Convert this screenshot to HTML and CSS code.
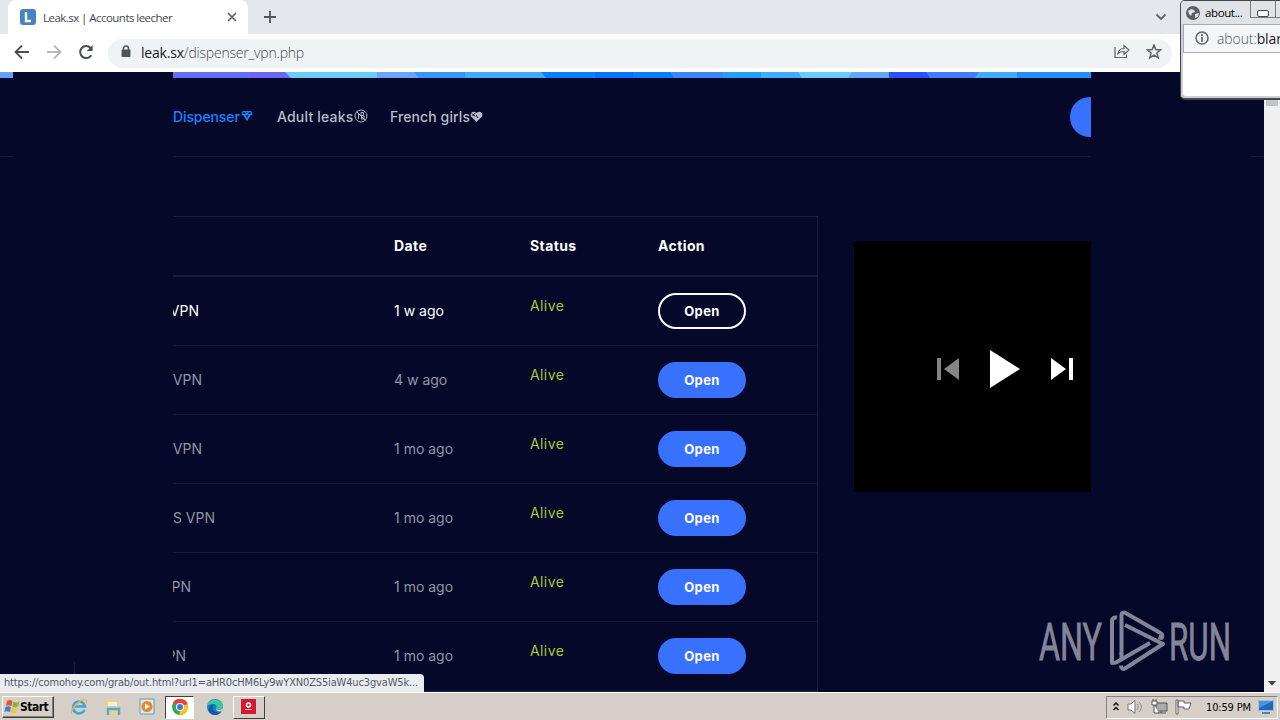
FILE: index.html
```
<!DOCTYPE html>
<html lang="en">
<head>
  <meta charset="UTF-8">
  <title>Leak.sx | Accounts leecher</title>
  <link rel="stylesheet" href="styles.css">
</head>
<body>
  <header class="tab-strip">
    <div class="tab">
      <span class="favicon"><svg width="16" height="16"><path d="M6 3v9h5" fill="none" stroke="#fff" stroke-width="2.4"/></svg></span>
      <span class="tab-title">Leak.sx | Accounts leecher</span>
      <svg class="tab-close" width="10" height="10"><path d="M1 1l8 8M9 1l-8 8" stroke="#5f6368" stroke-width="1.7"/></svg>
    </div>
    <svg class="new-tab" width="14" height="14"><path d="M7 1v12M1 7h12" stroke="#505458" stroke-width="1.8"/></svg>
    <svg class="tab-search" width="12" height="8"><path d="M1.500 1.500L6 6l4.500-4.500" fill="none" stroke="#5f6368" stroke-width="1.800"/></svg>
  </header>
  <div class="toolbar">
    <svg width="16" height="16" fill="none" stroke="#4a4d51" stroke-width="1.800"><path d="M15 7H2M8 .5L1.500 7 8 13.500"/></svg>
    <svg width="16" height="16" fill="none" stroke="#b5b7ba" stroke-width="1.800"><path d="M1 7h13M8 .5L14.500 7 8 13.500"/></svg>
    <svg width="16" height="16"><path d="M13.300 10.200A6 6 0 1 1 12.600 3" fill="none" stroke="#4a4d51" stroke-width="2"/><path d="M14.600 0v6H8.800z" fill="#4a4d51"/></svg>
    <div class="address">
      <svg width="10" height="14"><path d="M2.500 5V3.500a2.500 2.500 0 0 1 5 0V5" fill="none" stroke="#505458" stroke-width="1.500"/><rect x="0.500" y="4.500" width="9" height="7.500" rx="1" fill="#505458"/></svg>
      <span class="url"><b>leak.sx</b>/dispenser_vpn.php</span>
      <svg class="share" width="16" height="16" fill="none" stroke="#5f6368" stroke-width="1.200"><path d="M1 3v10.500h11.500v-3M4 9.500c.5-3.500 2.500-5 6-5V1.500L15 6l-5 4.500v-3c-2.500 0-4.500.5-6 2z"/></svg>
      <svg class="star" width="16" height="16"><path d="M8 1l1.800 4.600 4.900.3L10.900 9l1.300 4.800L8 11.100l-4.200 2.700L5.100 9 1.300 5.900l4.900-.3z" fill="none" stroke="#5f6368" stroke-width="1.500"/></svg>
    </div>
  </div>

  <main class="page">
    <svg class="ribbon" width="1264" height="6">
      <path d="M0 0h13v6H0z" fill="#679fff"/>
      <path d="M173 0h77v6h-77z" fill="#636dfe"/>
      <path d="M249 0h42v6h-42z" fill="#6b67f7"/>
      <path d="M285 0h93v6h-87z" fill="#68cef5"/>
      <path d="M377 0h42v6h-42z" fill="#6ca6fa"/>
      <path d="M414 0h53v6h-48z" fill="#3996ff"/>
      <path d="M465 0h84v6h-84z" fill="#3caef9"/>
      <path d="M541 0h55v6h-50z" fill="#0481fb"/>
      <path d="M595 0h39v6h-39z" fill="#0473fc"/>
      <path d="M633 0h43v6h-43z" fill="#087efc"/>
      <path d="M670 0h54v6h-50z" fill="#3e86fb"/>
      <path d="M723 0h39v6h-39z" fill="#229eff"/>
      <path d="M761 0h42v6h-42z" fill="#3caefb"/>
      <path d="M798 0h56v6h-52z" fill="#68cdf5"/>
      <path d="M852 0h38v6h-42z" fill="#62a6fa"/>
      <path d="M889 0h42v6h-42z" fill="#2b50fc"/>
      <path d="M926 0h54v6h-50z" fill="#427cfe"/>
      <path d="M979 0h39v6h-43z" fill="#3daef7"/>
      <path d="M1017 0h74v6h-74z" fill="#208fff"/>
    </svg>
    <nav class="site-nav">
      <a class="nav-link dispenser">Dispenser<svg width="12" height="12" fill="none" stroke="#1a82ff" stroke-width="1.200"><path d="M1.500 1.600h9M.5 4.600h11M1 2l5 8 5-8M3.500 4.500L6 9l2.500-4.500M4 1.500l2 3 2-3"/></svg></a>
      <a class="nav-link adult">Adult leaks<svg width="14" height="14" fill="none" stroke="#b9bbcb"><circle cx="7" cy="7" r="6"/><path d="M2.500 2.500l9 9M4.500 5v5M7 3.500h2.500v3H7zM7.500 6.500v3.500h2.500V7"/></svg></a>
      <a class="nav-link french">French girls<svg width="13" height="13"><path d="M6.500 12L1 6.500C-.5 3 3 0 6.500 3 10 0 13.500 3 12 6.500z" fill="#b9bbcb"/><path d="M2 3.500l3 3M5 3L2.500 6M6 5l2 3" stroke="#050829"/></svg></a>
      <span class="login"></span>
    </nav>
    <div class="content">
      <div class="table">
        <div class="row head">
          <span></span><span>Date</span><span>Status</span><span>Action</span>
        </div>
        <div class="row hovered">
          <span class="name end-1">VPN</span><span>1 w ago</span><span class="alive">Alive</span><a class="open">Open</a>
        </div>
        <div class="row">
          <span class="name end-2">VPN</span><span>4 w ago</span><span class="alive">Alive</span><a class="open">Open</a>
        </div>
        <div class="row">
          <span class="name end-2">VPN</span><span>1 mo ago</span><span class="alive">Alive</span><a class="open">Open</a>
        </div>
        <div class="row">
          <span class="name end-3">S VPN</span><span>1 mo ago</span><span class="alive">Alive</span><a class="open">Open</a>
        </div>
        <div class="row">
          <span class="name end-4">VPN</span><span>1 mo ago</span><span class="alive">Alive</span><a class="open">Open</a>
        </div>
        <div class="row">
          <span class="name end-5">VPN</span><span>1 mo ago</span><span class="alive">Alive</span><a class="open">Open</a>
        </div>
      </div>
      <div class="player">
        <svg width="22" height="22" fill="#858585"><path d="M0 0h4v22H0zM22 0v22L7 11z"/></svg>
        <svg width="30" height="38" fill="#fff"><path d="M0 0l30 19L0 38z"/></svg>
        <svg width="22" height="22" fill="#fff"><path d="M18 0h4v22h-4zM0 0l15 11L0 22z"/></svg>
      </div>
    </div>
    <div class="side side-left"></div>
    <div class="side side-right"></div>
    <svg class="watermark" width="196" height="64">
      <text x="1" y="50.500" textLength="63" lengthAdjust="spacingAndGlyphs">ANY</text>
      <text x="131" y="50.500" textLength="62" lengthAdjust="spacingAndGlyphs">RUN</text>
      <g fill="none" stroke="#858599" stroke-width="4" stroke-linejoin="round">
        <path d="M79 8.500c-3-.5-5 1-5 4V54l4-.5L112 34"/>
        <path d="M83.500 45V6c0-2 2-3 4-2l35 20c2 1 2.500 3 1 5l-3-1"/>
        <path d="M87 16l38 19-38 24.500c-2 1-4 0-4-3M83.500 50V44"/>
      </g>
    </svg>
    <div class="scrollbar">
      <span class="thumb"></span>
      <svg width="8" height="5"><path d="M0 0h8L4 4.500z" fill="#404040"/></svg>
    </div>
    <div class="link-status">https://comohoy.com/grab/out.html?url1=aHR0cHM6Ly9wYXN0ZS5iaW4uc3gvaW5k...</div>
  </main>

  <footer class="taskbar">
    <div class="start">
      <svg width="16" height="16"><path d="M3 2c2-1.500 4-1.500 5.500 0L7.500 7c-2-1-4-1-5.500 0z" fill="#e5552b"/><path d="M9.500 2.500c2 1.200 4 1.200 6 0L14 7.500c-2 1-4 1-5.500 0z" fill="#76b943"/><path d="M1.500 8c2-1 4-1 5.500 0L6 13c-2-1-4-1-5.500 0z" fill="#3c83cf"/><path d="M8 8.500c2 1 4 1 5.500 0L12.500 13.500c-2 1-4 1-5.500 0z" fill="#f7c52d"/></svg>
      <b>Start</b>
    </div>
    <div class="task"><svg width="18" height="18"><path d="M14.500 12A6 6 0 1 1 15 8.500H5" fill="none" stroke="#3ba5df" stroke-width="2.500"/><path d="M2 16C-1 12 11 0 16 2c1 .5 1 1.500 0 3" fill="none" stroke="#e6b93c" stroke-width="1.300"/></svg></div>
    <div class="task"><svg width="18" height="18"><path d="M2 2h5l1 2h8v12H2z" fill="#efd47a"/><path d="M4 4h9v4H4z" fill="#fff3b8"/><path d="M3 8h14v3H3z" fill="#a9d6ea"/><path d="M4 17v-6h11v6" fill="none" stroke="#5ca9cf" stroke-width="2.500"/></svg></div>
    <div class="task"><svg width="18" height="18"><path d="M2 1h14v15H2z" fill="#d7eaf7" stroke="#5b9ecb"/><circle cx="9" cy="8.500" r="5.500" fill="#f48320"/><path d="M7 5.500l5 3-5 3z" fill="#fff"/></svg></div>
    <div class="task pressed"><svg width="18" height="18"><circle cx="9" cy="9" r="8" fill="#35a853"/><path d="M9 9L2 5A8 8 0 0 1 16.500 6z" fill="#e84435"/><path d="M9 9l7.500-3A8 8 0 0 1 8.500 17z" fill="#fcc31e"/><circle cx="9" cy="9" r="4" fill="#fff"/><circle cx="9" cy="9" r="3" fill="#367be8"/></svg></div>
    <div class="task"><svg width="18" height="18"><circle cx="9" cy="9" r="8" fill="#157fc8"/><path d="M1 8C3 0 15-1 17 8c0 4-5 5-7 3 1-2 1-5-3-5-3 0-5 1-6 2z" fill="#3bc6a0"/><path d="M9 6c-5 3-2 10 6 8-3 4-10 4-12-1-1-4 2-7 6-7z" fill="#1257a7"/><path d="M10 11c2 2 5 1 7-1l-1 3c-3 1-6 0-6-2z" fill="#d6cfc7"/></svg></div>
    <div class="task raised"><svg width="16" height="16"><path d="M0 0h15v15H0z" fill="#d5172f"/><circle cx="7.500" cy="6" r="2" fill="none" stroke="#fff" stroke-width="1.500"/><path d="M4 10.500h7" stroke="#f3a4ac"/></svg></div>
    <div class="tray">
      <svg width="8" height="12" fill="none" stroke="#111" stroke-width="1.500"><path d="M1.500 4.500L4 2l2.500 2.500M1.500 9L4 6.500 6.500 9"/></svg>
      <svg width="17" height="16"><path d="M1 5h3l4-3.500v13L4 11H1z" fill="#fff" stroke="#777"/><path d="M10 5c1.500 2 1.500 4 0 6M12 3c3 3 3 7 0 10" fill="none" stroke="#888"/></svg>
      <svg width="17" height="16" stroke="#555"><path d="M5 4h11v8H5z" fill="#aaa"/><path d="M1 2h5v4H1zM3 6v8h5M7 14h8M10 12v2M2 0v2M5 0v2" fill="#fff"/></svg>
      <svg width="17" height="16" fill="#fff" stroke="#666"><path d="M1 1h2v14H1zM3 2h6v2h7l-2 6H9V8H3z"/></svg>
      <span class="clock">10:59 PM</span>
      <svg width="16" height="14"><path d="M.5.5h15v10H.5z" fill="#2268bd" stroke="#9cbfe0"/><path d="M1 1h14L1 8z" fill="#4b93dc"/><path d="M4 12h8v2H4z" fill="#4a82ba"/></svg>
    </div>
  </footer>

  <div class="popup">
    <div class="popup-title">
      <svg width="14" height="14"><circle cx="7" cy="7" r="7" fill="#5b5e63"/><path d="M2 5l3-2 3 1 1 2-3 1-1 3-2-2zM9 8l4-1-1 4-3 1z" fill="#dfe2e6"/></svg>
      <span>about...</span>
      <i class="minimize"></i>
      <i class="minimize"></i>
    </div>
    <div class="popup-address">
      <svg width="14" height="14"><circle cx="7" cy="7" r="6" fill="none" stroke="#5f6368" stroke-width="1.500"/><path d="M7 6v5M7 3v2" stroke="#5f6368" stroke-width="1.700"/></svg>
      <span>about:<b>blank</b></span>
    </div>
  </div>
</body>
</html>
```
FILE: styles.css
```
* {
  box-sizing: border-box;
}
body {
  width: 1280px;
  height: 720px;
  margin: 0;
  position: relative;
  display: flex;
  flex-direction: column;
  overflow: hidden;
  font-family: Inter, sans-serif;
}
svg {
  display: block;
  flex: none;
}
.tab-strip {
  height: 34px;
  display: flex;
  align-items: center;
  padding-left: 8px;
  background: #e4e8ec;
}
.tab {
  width: 240px;
  height: 34px;
  display: flex;
  align-items: center;
  padding: 0 11px 0 12px;
  background: #fff;
  border-radius: 8px 8px 0 0;
}
.favicon {
  background: #4682c4;
  border-radius: 3px;
}
.tab-title {
  margin-left: 7px;
  font: 11.5px "Open Sans", sans-serif;
  letter-spacing: -0.54px;
  color: #45494d;
  white-space: nowrap;
}
.tab-close {
  margin-left: auto;
}
.new-tab {
  margin-left: 15px;
}
.tab-search {
  margin-left: auto;
  margin-right: 113px;
}
.toolbar {
  height: 38px;
  display: flex;
  align-items: center;
  gap: 16px;
  padding-left: 14px;
  background: #fff;
}
.address {
  width: 1064px;
  height: 29px;
  display: flex;
  align-items: center;
  margin-left: -2px;
  padding: 0 10px 2px 13px;
  background: #f0f3f5;
  border-radius: 15px;
}
.url {
  margin-left: 10px;
  font: 300 14px "Open Sans", sans-serif;
  letter-spacing: -0.2px;
  color: #45494d;
}
.url b,
.popup-address b {
  font-weight: 400;
  color: #202124;
}
.share {
  margin-left: auto;
  margin-right: 16px;
}
.page {
  height: 620px;
  position: relative;
  overflow: hidden;
  background: #050829;
  color: #9294a8;
}
.site-nav {
  width: 1264px;
  height: 79px;
  display: flex;
  align-items: center;
  padding-left: 173px;
  border-bottom: 1px solid #15183a;
}
.nav-link {
  display: flex;
  align-items: center;
  padding-bottom: 2px;
  font-size: 14px;
  font-weight: 500;
  color: #b9bbcb;
  white-space: nowrap;
}
.nav-link.dispenser {
  width: 104px;
  gap: 1px;
  letter-spacing: -0.1px;
  color: #1a82ff;
}
.nav-link.adult {
  width: 113px;
  letter-spacing: 0.2px;
}
.nav-link.french {
  letter-spacing: 0.1px;
}
.login {
  width: 100px;
  height: 40px;
  margin-left: auto;
  margin-right: 94px;
  border-radius: 20px;
  background: #3971ff;
}
.content {
  display: flex;
  align-items: flex-start;
  padding: 59px 0 0 74px;
}
.table {
  width: 744px;
  border: 1px solid #191c3b;
}
.row {
  height: 69px;
  display: grid;
  grid-template-columns: 319px 136px 128px 1fr;
  align-items: center;
  border-bottom: 1px solid #15183a;
  font-size: 14px;
}
.row > span {
  padding-bottom: 2px;
}
.row.head {
  height: 60px;
  border-bottom: 2px solid #1a1d3f;
  color: #fff;
  font-weight: 700;
  letter-spacing: 0.4px;
}
.row.hovered {
  color: #fff;
}
.name {
  text-align: right;
}
.end-1 {
  padding-right: 195px;
}
.end-2 {
  padding-right: 192px;
}
.end-3 {
  padding-right: 179px;
}
.end-4 {
  padding-right: 203px;
}
.end-5 {
  padding-right: 208px;
}
.row > .alive {
  padding-bottom: 12px;
  letter-spacing: 0.4px;
  color: #a5c936;
}
.open {
  width: 88px;
  height: 36px;
  display: flex;
  align-items: center;
  justify-content: center;
  border: 2px solid #3971ff;
  border-radius: 18px;
  background: #3971ff;
  color: #fff;
  font-size: 13px;
  font-weight: 700;
  letter-spacing: 0.4px;
}
.hovered .open {
  border-color: #fff;
  background: transparent;
}
.player {
  width: 302px;
  height: 251px;
  display: flex;
  align-items: center;
  justify-content: center;
  gap: 31px;
  margin: 25px 0 0 36px;
  padding-top: 4px;
  background: #000;
}
/* banner slots that cover both edges of the page */
.side {
  position: absolute;
  top: 0;
  background: #050829;
}
.side-left {
  left: 13px;
  width: 160px;
  height: 590px;
}
.side-right {
  left: 1091px;
  width: 159px;
  height: 590px;
}
.watermark {
  position: absolute;
  left: 1038px;
  top: 537px;
  overflow: visible;
  font: 400 52px Roboto, sans-serif;
  fill: #858599;
  stroke: #858599;
  stroke-width: 0.8px;
}
.scrollbar {
  position: absolute;
  top: 0;
  right: 0;
  width: 16px;
  height: 620px;
  display: flex;
  flex-direction: column;
  align-items: center;
  justify-content: space-between;
  padding: 17px 0 6px;
  background: #f0f0f0;
}
.thumb {
  width: 12px;
  height: 17px;
  background: #c1c3c5;
}
.link-status {
  position: absolute;
  left: 0;
  bottom: 0;
  width: 424px;
  height: 18px;
  padding-left: 4px;
  border-radius: 0 4px 0 0;
  background: #e9edf2;
  color: #55595e;
  font: 11px/18px "DejaVu Sans Condensed", "DejaVu Sans", sans-serif;
  letter-spacing: -0.15px;
  white-space: nowrap;
}
.taskbar {
  height: 28px;
  display: flex;
  align-items: center;
  padding: 1px 2px 0;
  border-top: 1px solid #fff;
  background: #d6cfc7;
}
.start {
  width: 52px;
  height: 22px;
  display: flex;
  align-items: center;
  padding-left: 1px;
  margin-right: 9px;
  border: 1px solid;
  border-color: #fff #404040 #404040 #fff;
  box-shadow: inset -1px -1px #858078;
  font: 12px "DejaVu Sans Condensed", sans-serif;
  letter-spacing: -0.5px;
}
.task {
  width: 32px;
  height: 23px;
  display: flex;
  align-items: center;
  justify-content: center;
  margin-right: 2px;
}
.task.pressed {
  width: 29px;
  margin-right: 5px;
  background: #fff;
  border: 1px solid;
  border-color: #404040 #fff #fff #404040;
}
.task.raised {
  border: 1px solid;
  border-color: #fff #404040 #404040 #fff;
}
.tray {
  width: 172px;
  height: 23px;
  display: flex;
  align-items: center;
  gap: 7px;
  margin-left: auto;
  padding-left: 5px;
  border: 1px solid;
  border-color: #858078 #fff #fff #858078;
}
.clock {
  width: 45px;
  margin-left: 7px;
  font: 11px "DejaVu Sans Condensed", sans-serif;
  letter-spacing: -0.15px;
  white-space: nowrap;
}
.popup {
  position: absolute;
  left: 1180px;
  top: 0;
  width: 154px;
  height: 100px;
  padding-left: 2px;
  border: 1px solid #45484c;
  border-bottom-width: 2px;
  border-radius: 5px;
  background: #fff;
  box-shadow: inset 2px -2px #cdd0d4;
}
.popup-title {
  height: 23px;
  display: flex;
  align-items: center;
  margin-left: -2px;
  padding-left: 5px;
  background: #dfe2e6;
  border-radius: 4px 0 0 0;
  font: 11.5px "Open Sans", sans-serif;
  letter-spacing: -0.4px;
  white-space: nowrap;
}
.popup-title span {
  width: 45px;
  margin-left: 5px;
}
.minimize {
  width: 26px;
  height: 17px;
  align-self: flex-start;
  margin-right: -1px;
  padding: 9px 6px 0;
  border: 1px solid #777b80;
  border-top: 0;
}
.minimize::before {
  content: "";
  display: block;
  height: 5px;
  border: 1px solid #45484c;
  border-radius: 2px;
  background: #fff;
}
.popup-address {
  height: 29px;
  display: flex;
  align-items: center;
  gap: 8px;
  padding: 0 0 1px 11px;
  border: 1px solid #a8abae;
  background: #f3f5f7;
  font: 300 14px "Open Sans", sans-serif;
  letter-spacing: -0.1px;
  color: #55595d;
}
```
